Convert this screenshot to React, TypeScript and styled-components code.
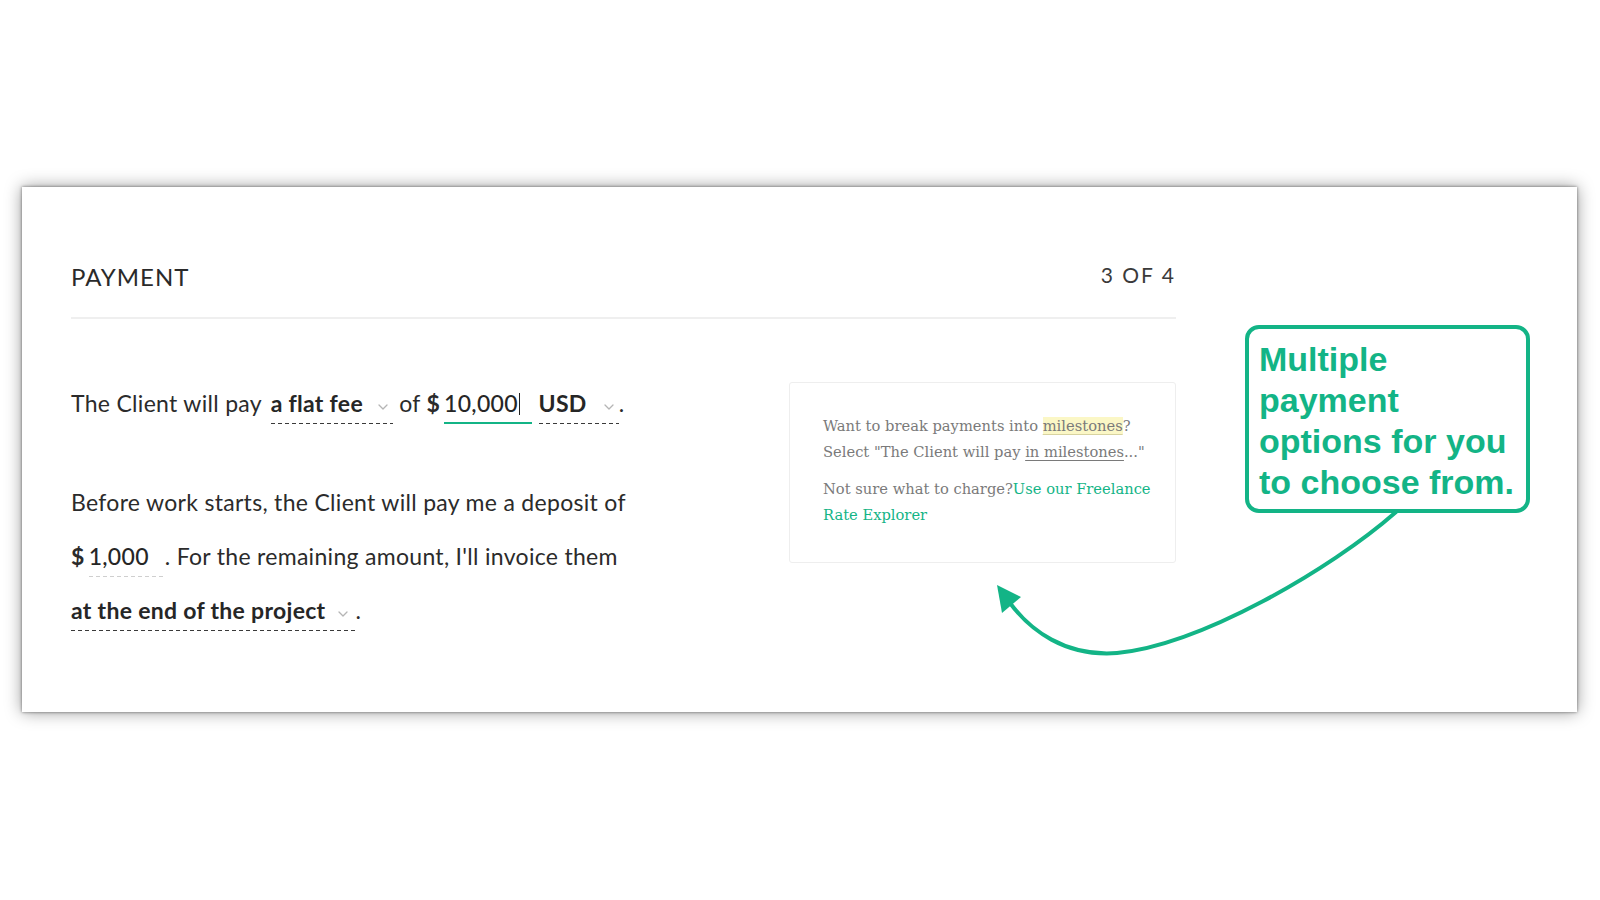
import styled, { createGlobalStyle } from "styled-components";

const GREEN = "#13b486";

const GlobalStyle = createGlobalStyle`
  html, body {
    margin: 0;
    padding: 0;
    background: #ffffff;
  }
  body {
    font-family: Lato, "Open Sans", Arial, sans-serif;
    color: #2e2e2e;
  }
`;

const Page = styled.div`
  width: 1600px;
  height: 900px;
  padding-top: 187px;
  box-sizing: border-box;
`;

const Card = styled.section`
  position: relative;
  margin-left: 22px;
  width: 1555px;
  height: 525px;
  box-sizing: border-box;
  padding: 76px 0 0 49px;
  background: #fff;
  box-shadow: 0 0 3px rgba(0, 0, 0, 0.5), 0 0 16px rgba(0, 0, 0, 0.4);
`;

const Content = styled.div`
  width: 1105px;
`;

const Header = styled.header`
  display: flex;
  justify-content: space-between;
  align-items: center;
  padding-bottom: 26px;
  border-bottom: 2px solid #efefef;
`;

const Title = styled.h2`
  margin: 0;
  font-size: 24px;
  line-height: 28px;
  font-weight: 400;
  letter-spacing: 1px;
  color: #2a2a2a;
`;

const Step = styled.span`
  font-size: 21px;
  line-height: 28px;
  letter-spacing: 2px;
  color: #3a3a3a;
  margin-top: -4px;
`;

const Body = styled.div`
  display: flex;
  justify-content: space-between;
  align-items: flex-start;
  margin-top: 57px;
`;

const Form = styled.div`
  width: 600px;
  font-size: 23px;
  letter-spacing: 0.3px;
  color: #2b2b2b;
`;

const Sentence = styled.p<{ $gap?: number }>`
  margin: 0 0 ${(p) => p.$gap ?? 0}px;
  line-height: 54px;
  white-space: nowrap;
`;

const Select = styled.span<{ $pad?: number }>`
  display: inline-block;
  line-height: 26px;
  padding: 0 ${(p) => p.$pad ?? 7}px 8px 0;
  font-weight: 700;
  color: #262626;
  background-image: repeating-linear-gradient(
    to right,
    #3a3a3a 0 4px,
    transparent 4px 7px
  );
  background-repeat: no-repeat;
  background-position: left bottom;
  background-size: 100% 1.5px;
`;

const Chevron = styled.svg<{ $gap: number }>`
  display: inline-block;
  width: 10px;
  height: 6px;
  margin-left: ${(p) => p.$gap}px;
  vertical-align: 2px;
`;

const Dollar = styled.span`
  font-weight: 700;
  margin-right: 4px;
`;

const Amount = styled.span<{ $active?: boolean }>`
  display: inline-block;
  line-height: 26px;
  padding: 0 ${(p) => (p.$active ? 12 : 16)}px 8px 0;
  font-weight: 500;
  color: #262626;
  background-repeat: no-repeat;
  background-position: left bottom;
  background-image: ${(p) =>
    p.$active
      ? `linear-gradient(${GREEN}, ${GREEN})`
      : `repeating-linear-gradient(to right, #cfcfcf 0 4px, transparent 4px 7px)`};
  background-size: 100% ${(p) => (p.$active ? 2.5 : 1.5)}px;
`;

const Caret = styled.span`
  display: inline-block;
  width: 1.5px;
  height: 22px;
  background: #222;
  vertical-align: -3px;
  margin-left: 1px;
`;

const Tip = styled.aside`
  width: 387px;
  box-sizing: border-box;
  margin-top: 6px;
  padding: 30px 16px 34px 33px;
  border: 1.5px solid #eeeeee;
  border-radius: 3px;
  font-family: "DejaVu Serif", "Liberation Serif", serif;
  font-size: 14.7px;
  line-height: 26px;
  color: #7a7a7a;
`;

const TipText = styled.p`
  margin: 0 0 11px;
  &:last-child {
    margin-bottom: 0;
  }
`;

const Highlight = styled.span`
  background: #fbf7c6;
  text-decoration: underline;
  text-decoration-color: #d8d3a0;
  text-underline-offset: 3px;
`;

const Underlined = styled.span`
  text-decoration: underline;
  text-underline-offset: 3px;
`;

const TipLink = styled.a`
  color: ${GREEN};
  text-decoration: none;
`;

const Callout = styled.div`
  position: absolute;
  left: 1223px;
  top: 138px;
  width: 285px;
  height: 188px;
  box-sizing: border-box;
  padding: 10px 10px 0 10px;
  border: 4px solid ${GREEN};
  border-radius: 14px;
  background: #fff;
  font-family: "Liberation Sans", Arial, sans-serif;
  font-weight: 700;
  font-size: 34px;
  line-height: 41px;
  color: ${GREEN};
`;

const Arrow = styled.svg`
  position: absolute;
  left: 953px;
  top: 318px;
  width: 450px;
  height: 165px;
  overflow: visible;
  pointer-events: none;
`;

const ChevronIcon = ({ gap }: { gap: number }) => (
  <Chevron $gap={gap} viewBox="0 0 10 6">
    <polyline
      points="1,1 5,5 9,1"
      fill="none"
      stroke="#b5b5b5"
      strokeWidth="1.3"
      strokeLinecap="round"
      strokeLinejoin="round"
    />
  </Chevron>
);

export default function App() {
  return (
    <>
      <GlobalStyle />
      <Page>
        <Card>
          <Content>
            <Header>
              <Title>PAYMENT</Title>
              <Step>3 OF 4</Step>
            </Header>
            <Body>
              <Form>
                <Sentence $gap={45}>
                  The Client will pay{" "}
                  <Select $pad={5} style={{ marginLeft: 3 }}>
                    a flat fee
                    <ChevronIcon gap={15} />
                  </Select>{" "}
                  of <Dollar>$</Dollar>
                  <Amount $active>
                    10,000
                    <Caret />
                  </Amount>{" "}
                  <Select $pad={5}>
                    USD
                    <ChevronIcon gap={17} />
                  </Select>
                  .
                </Sentence>
                <Sentence>
                  Before work starts, the Client will pay me a deposit of
                  <br />
                  <Dollar>$</Dollar>
                  <Amount>1,000</Amount>. For the remaining amount, I'll invoice
                  them
                  <br />
                  <Select $pad={7}>
                    at the end of the project
                    <ChevronIcon gap={13} />
                  </Select>
                  .
                </Sentence>
              </Form>
              <Tip>
                <TipText>
                  Want to break payments into <Highlight>milestones</Highlight>?
                  Select "The Client will pay <Underlined>in milestones</Underlined>
                  ..."
                </TipText>
                <TipText>
                  Not sure what to charge?
                  <TipLink href="#">Use our Freelance Rate Explorer</TipLink>
                </TipText>
              </Tip>
            </Body>
          </Content>

          <Callout>
            Multiple payment options for you to choose from.
          </Callout>

          <Arrow viewBox="975 505 450 165">
            <path
              d="M1396 512 C1330 570 1200 645 1117 653 C1065 657 1030 630 1010 603"
              fill="none"
              stroke={GREEN}
              strokeWidth="4"
              strokeLinecap="round"
            />
            <polygon points="997,585 1021,597 1002,613" fill={GREEN} />
          </Arrow>
        </Card>
      </Page>
    </>
  );
}
